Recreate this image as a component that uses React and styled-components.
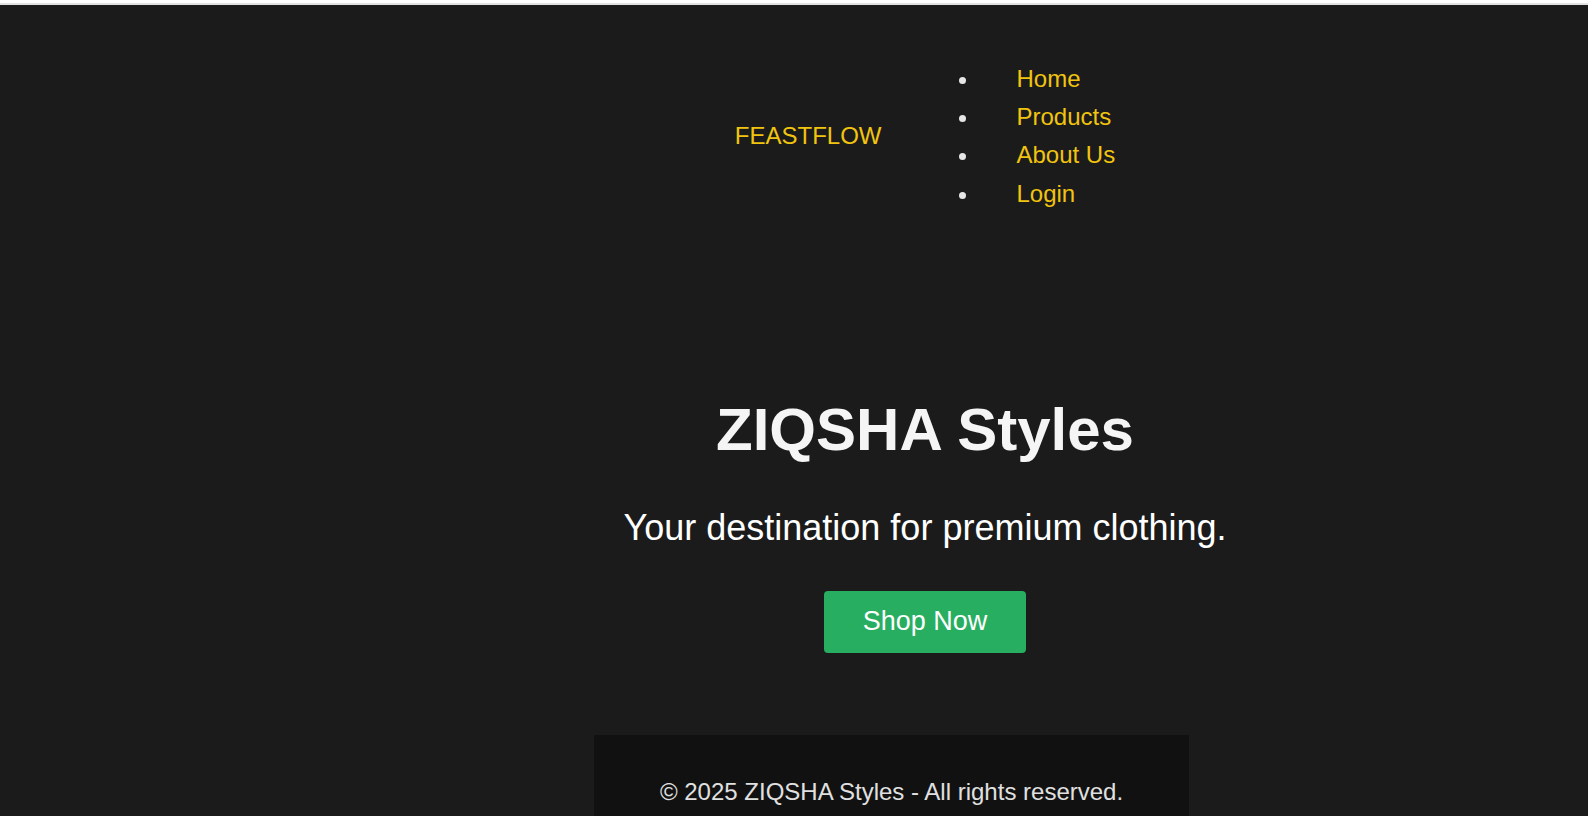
import React from "react";
import styled, { createGlobalStyle } from "styled-components";

const GlobalStyle = createGlobalStyle`
  body {
    margin: 0;
    background: #ffffff;
    font-family: "Liberation Sans", Arial, sans-serif;
  }
`;

const Page = styled.div`
  margin-top: 3px;
  border-top: 2px solid #e2e2e2;
  background: #1b1b1b;
  min-height: 811px;
  padding-left: 262px;
  display: flex;
  flex-direction: column;
  align-items: center;
  overflow: hidden;
`;

const Header = styled.header`
  display: flex;
  align-items: center;
  justify-content: center;
  gap: 55px;
  padding-top: 55px;
`;

const Logo = styled.div`
  color: #f1c40f;
  font-size: 24px;
`;

const NavList = styled.ul`
  margin: 0;
  padding-left: 44px;
  color: #e6e6e6;
`;

const NavItem = styled.li`
  padding: 5.1px 0 5.1px 36px;
  font-size: 24px;
`;

const NavLink = styled.a`
  color: #f1c40f;
  text-decoration: none;
`;

const Hero = styled.section`
  display: flex;
  flex-direction: column;
  align-items: center;
  text-align: center;
  padding: 182px 0 82px;
`;

const Title = styled.h1`
  margin: 0 0 43px;
  font-size: 60px;
  font-weight: 700;
  color: #f5f5f5;
`;

const Tagline = styled.p`
  margin: 0 0 42px;
  font-size: 36px;
  color: #ffffff;
`;

const ShopButton = styled.button`
  font-family: inherit;
  font-size: 27px;
  color: #ffffff;
  background: #27ae60;
  border: none;
  border-radius: 4px;
  padding: 15.5px 39px;
  cursor: pointer;
`;

const Footer = styled.footer`
  align-self: flex-start;
  margin-left: 332px;
  width: 595px;
  background: #111111;
  padding: 43px 0 40px;
  text-align: center;
  color: #e0e0e0;
  font-size: 24px;
`;

const links = ["Home", "Products", "About Us", "Login"];

export default function App() {
  return (
    <>
      <GlobalStyle />
      <Page>
        <Header>
          <Logo>FEASTFLOW</Logo>
          <NavList>
            {links.map((l) => (
              <NavItem key={l}>
                <NavLink href="#">{l}</NavLink>
              </NavItem>
            ))}
          </NavList>
        </Header>
        <Hero>
          <Title>ZIQSHA Styles</Title>
          <Tagline>Your destination for premium clothing.</Tagline>
          <ShopButton>Shop Now</ShopButton>
        </Hero>
        <Footer>© 2025 ZIQSHA Styles - All rights reserved.</Footer>
      </Page>
    </>
  );
}
